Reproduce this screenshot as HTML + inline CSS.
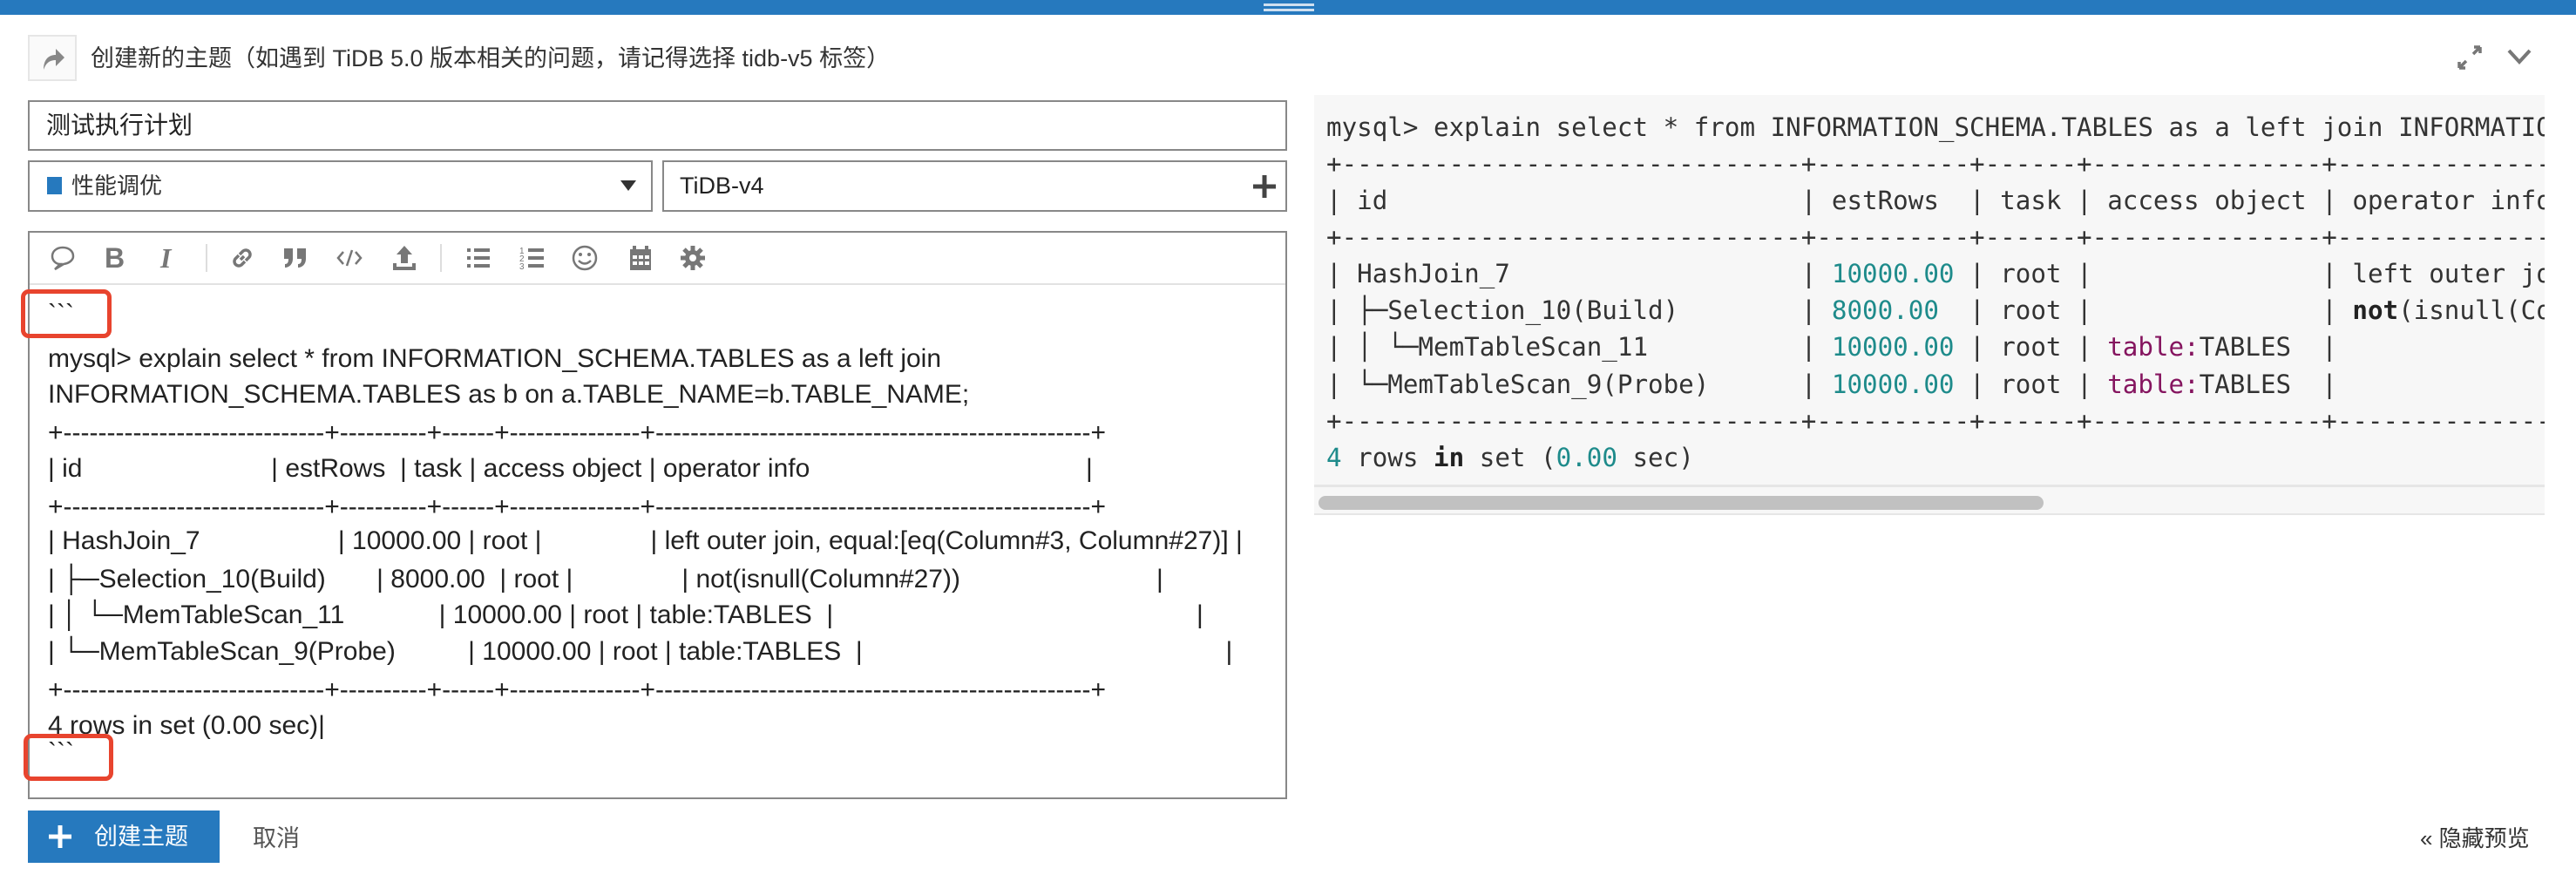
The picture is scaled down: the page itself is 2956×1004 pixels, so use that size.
<!DOCTYPE html>
<html><head><meta charset="utf-8">
<style>
*{box-sizing:border-box;margin:0;padding:0}
body{width:2956px;height:1004px;background:#fff;position:relative;overflow:hidden;font-family:"Liberation Sans","Noto Sans CJK SC",sans-serif;color:#222}
.a{position:absolute;white-space:pre}
.bar{left:0;top:0;width:2956px;height:17px;background:#2679be}
.ln{left:55px;font-size:30px;line-height:40px;height:40px}
.m{position:absolute;left:1522px;font-family:"DejaVu Sans Mono","Liberation Mono",monospace;font-size:29.2px;line-height:40px;white-space:pre;color:#333}
.n{color:#1e8b8b}.p{color:#85155f}.b{font-weight:bold;color:#222}
.red{position:absolute;border:5px solid #e8442e;border-radius:9px}
.ic{position:absolute;top:280px}
</style></head><body>
<div class="a bar"></div>
<div class="a" style="left:1450px;top:4px;width:58px;height:3px;background:#cfe0f0"></div>
<div class="a" style="left:1450px;top:10px;width:58px;height:3px;background:#cfe0f0"></div>

<div class="a" style="left:32px;top:40px;width:56px;height:53px;border:2px solid #e6e6e6;background:#fafafa"></div>
<svg class="a" style="left:44px;top:52px" width="32" height="32" viewBox="0 0 32 32"><path d="M6 28 C6 16 12 11 20 11 L20 4 L30 14 L20 24 L20 17 C13 17 9 20 6 28Z" fill="#888"/></svg>
<div class="a" style="left:104px;top:48px;font-size:27px;line-height:38px;color:#333">创建新的主题（如遇到 TiDB 5.0 版本相关的问题，请记得选择 tidb-v5 标签）</div>
<svg class="a" style="left:2818px;top:50px" width="32" height="32" viewBox="0 0 32 32"><path d="M4 28 L12 20 M4 28 L4 21 M4 28 L11 28 M28 4 L20 12 M28 4 L28 11 M28 4 L21 4" stroke="#777" stroke-width="3.5" fill="none"/></svg>
<svg class="a" style="left:2876px;top:52px" width="30" height="26" viewBox="0 0 30 26"><path d="M3 6 L15 19 L27 6" stroke="#777" stroke-width="4" fill="none"/></svg>

<div class="a" style="left:32px;top:115px;width:1445px;height:58px;border:2px solid #888"></div>
<div class="a" style="left:53px;top:124px;font-size:28px;line-height:40px">测试执行计划</div>

<div class="a" style="left:32px;top:184px;width:717px;height:59px;border:2px solid #888"></div>
<div class="a" style="left:54px;top:203px;width:17px;height:20px;background:#2679be"></div>
<div class="a" style="left:82px;top:193px;font-size:26px;line-height:40px;color:#333">性能调优</div>
<svg class="a" style="left:712px;top:207px" width="18" height="14"><path d="M0 0 L18 0 L9 12Z" fill="#333"/></svg>
<div class="a" style="left:760px;top:184px;width:717px;height:59px;border:2px solid #888"></div>
<div class="a" style="left:780px;top:193px;font-size:27px;line-height:40px;color:#222">TiDB-v4</div>
<svg class="a" style="left:1438px;top:201px" width="26" height="26"><path d="M13 0 V26 M0 13 H26" stroke="#444" stroke-width="5"/></svg>

<div class="a" style="left:32px;top:265px;width:1445px;height:652px;border:2px solid #888"></div>
<div class="a" style="left:34px;top:325px;width:1441px;height:2px;background:#e2e2e2"></div>
<div class="a" style="left:236px;top:280px;width:2px;height:32px;background:#ddd"></div>
<div class="a" style="left:505px;top:280px;width:2px;height:32px;background:#ddd"></div>
<svg class="ic" style="left:56px" width="32" height="32" viewBox="0 0 32 32"><path d="M16 4 C8 4 4 9 4 14 C4 19 8 23 13 23 L7 29 L17 23 C24 22 28 18 28 14 C28 8 23 4 16 4Z" stroke="#777" stroke-width="2.5" fill="none"/></svg>
<div class="a" style="left:120px;top:276px;font-size:32px;font-weight:bold;color:#777;line-height:40px">B</div>
<div class="a" style="left:184px;top:276px;font-size:32px;font-style:italic;font-family:'Liberation Serif',serif;font-weight:bold;color:#777;line-height:40px">I</div>
<svg class="ic" style="left:262px" width="32" height="32" viewBox="0 0 32 32"><path d="M14 18 L18 14 M12 13 L8 17 a5 5 0 0 0 7 7 L19 20 M20 19 L24 15 a5 5 0 0 0 -7 -7 L13 12" stroke="#777" stroke-width="3.5" fill="none"/></svg>
<svg class="ic" style="left:323px" width="32" height="32" viewBox="0 0 32 32"><path d="M3 5h10v12c0 6-4 10-9 10v-4c3 0 4-2 4-6H3Z M18 5h10v12c0 6-4 10-9 10v-4c3 0 4-2 4-6h-5Z" fill="#777"/></svg>
<svg class="ic" style="left:385px" width="32" height="32" viewBox="0 0 32 32"><path d="M9 9 L3 16 L9 23 M23 9 L29 16 L23 23 M19 7 L13 25" stroke="#777" stroke-width="2.5" fill="none"/></svg>
<svg class="ic" style="left:448px" width="32" height="32" viewBox="0 0 32 32"><path d="M16 2 L7 12 H12 V22 H20 V12 H25Z M3 22 V30 H29 V22 H25 V26 H7 V22Z" fill="#777"/></svg>
<svg class="ic" style="left:533px" width="32" height="32" viewBox="0 0 32 32"><path d="M3 7h4M3 16h4M3 25h4M11 7h18M11 16h18M11 25h18" stroke="#777" stroke-width="4"/></svg>
<svg class="ic" style="left:595px" width="32" height="32" viewBox="0 0 32 32"><text x="1" y="11" font-size="10" fill="#777" font-family="Liberation Sans">1</text><text x="1" y="20" font-size="10" fill="#777" font-family="Liberation Sans">2</text><text x="1" y="29" font-size="10" fill="#777" font-family="Liberation Sans">3</text><path d="M11 7h18M11 16h18M11 25h18" stroke="#777" stroke-width="4"/></svg>
<svg class="ic" style="left:655px" width="32" height="32" viewBox="0 0 32 32"><circle cx="16" cy="16" r="13" stroke="#777" stroke-width="2.5" fill="none"/><circle cx="11" cy="12" r="2" fill="#777"/><circle cx="21" cy="12" r="2" fill="#777"/><path d="M9 19 Q16 26 23 19" stroke="#777" stroke-width="2.5" fill="none"/></svg>
<svg class="ic" style="left:719px" width="32" height="32" viewBox="0 0 32 32"><path d="M4 6h24v24H4Z" fill="#777"/><path d="M9 2v7M23 2v7" stroke="#777" stroke-width="4"/><path d="M7 13h5v4H7ZM14 13h5v4h-5ZM21 13h5v4h-5ZM7 20h5v4H7ZM14 20h5v4h-5ZM21 20h5v4h-5Z" fill="#fff"/></svg>
<svg class="ic" style="left:779px" width="32" height="32" viewBox="0 0 32 32"><circle cx="16" cy="16" r="9" fill="#777"/><path d="M16 2v28M2 16h28M6 6l20 20M26 6L6 26" stroke="#777" stroke-width="5"/><circle cx="16" cy="16" r="4" fill="#fff"/></svg>

<div class="a ln" style="top:341px">&#96;&#96;&#96;</div>
<div class="a ln" style="top:392px">mysql&gt; explain select * from INFORMATION_SCHEMA.TABLES as a left join</div>
<div class="a ln" style="top:433px">INFORMATION_SCHEMA.TABLES as b on a.TABLE_NAME=b.TABLE_NAME;</div>
<div class="a ln" style="top:477px">+------------------------------+----------+------+---------------+--------------------------------------------------+</div>
<div class="a ln" style="top:518px">| id                          | estRows  | task | access object | operator info                                      |</div>
<div class="a ln" style="top:562px">+------------------------------+----------+------+---------------+--------------------------------------------------+</div>
<div class="a ln" style="top:601px">| HashJoin_7                   | 10000.00 | root |               | left outer join, equal:[eq(Column#3, Column#27)] |</div>
<div class="a ln" style="top:645px">| ├─Selection_10(Build)       | 8000.00  | root |               | not(isnull(Column#27))                           |</div>
<div class="a ln" style="top:686px">| │ └─MemTableScan_11             | 10000.00 | root | table:TABLES  |                                                  |</div>
<div class="a ln" style="top:728px">| └─MemTableScan_9(Probe)          | 10000.00 | root | table:TABLES  |                                                  |</div>
<div class="a ln" style="top:772px">+------------------------------+----------+------+---------------+--------------------------------------------------+</div>
<div class="a ln" style="top:813px">4 rows in set (0.00 sec)|</div>
<div class="a ln" style="top:844px">&#96;&#96;&#96;</div>
<div class="red" style="left:24px;top:332px;width:104px;height:56px"></div>
<div class="red" style="left:27px;top:842px;width:103px;height:54px"></div>

<div class="a" style="left:32px;top:930px;width:220px;height:60px;background:#2679be"></div>
<svg class="a" style="left:56px;top:947px" width="26" height="26"><path d="M13 0V26M0 13H26" stroke="#fff" stroke-width="5"/></svg>
<div class="a" style="left:108px;top:940px;font-size:27px;line-height:40px;color:#fff">创建主题</div>
<div class="a" style="left:290px;top:942px;font-size:27px;line-height:40px;color:#555">取消</div>
<div class="a" style="left:2777px;top:942px;font-size:26px;line-height:40px;color:#333">« 隐藏预览</div>

<div class="a" style="left:1508px;top:109px;width:1412px;height:481px;background:#f7f7f7;overflow:hidden">
<div class="m" style="left:14px;top:17px">mysql&gt; explain select * from INFORMATION_SCHEMA.TABLES as a left join INFORMATION_SCHEMA.TABLES</div>
<div class="m" style="left:14px;top:59px">+------------------------------+----------+------+---------------+--------------------------------------------------+</div>
<div class="m" style="left:14px;top:101px">| id                           | estRows  | task | access object | operator info                                    |</div>
<div class="m" style="left:14px;top:143px">+------------------------------+----------+------+---------------+--------------------------------------------------+</div>
<div class="m" style="left:14px;top:185px">| HashJoin_7                   | <span class="n">10000.00</span> | root |               | left outer join, equal:[eq(Column#3, Column#27)] |</div>
<div class="m" style="left:14px;top:227px">| ├─Selection_10(Build)        | <span class="n">8000.00</span>  | root |               | <span class="b">not</span>(isnull(Column#27))                           |</div>
<div class="m" style="left:14px;top:269px">| │ └─MemTableScan_11          | <span class="n">10000.00</span> | root | <span class="p">table:</span>TABLES  |                                                  |</div>
<div class="m" style="left:14px;top:312px">| └─MemTableScan_9(Probe)      | <span class="n">10000.00</span> | root | <span class="p">table:</span>TABLES  |                                                  |</div>
<div class="m" style="left:14px;top:354px">+------------------------------+----------+------+---------------+--------------------------------------------------+</div>
<div class="m" style="left:14px;top:396px"><span class="n">4</span> rows <span class="b">in</span> set (<span class="n">0.00</span> sec)</div>
<div class="a" style="left:0;top:447px;width:1412px;height:3px;background:#e6e6e6"></div>
<div class="a" style="left:5px;top:460px;width:832px;height:16px;border-radius:8px;background:#c1c1c1"></div>
</div>
<div class="a" style="left:1508px;top:589px;width:1412px;height:2px;background:#e6e6e6"></div>
</body></html>
